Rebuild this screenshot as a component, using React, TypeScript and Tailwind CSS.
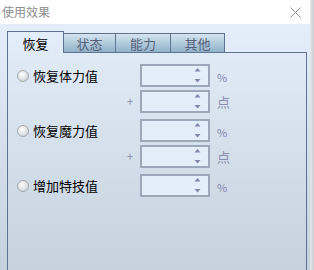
import React from "react";

const font = { fontFamily: '"Noto Sans CJK SC", "Noto Sans", sans-serif' };

function Radio() {
  return (
    <div className="w-[12px] h-[12px] rounded-full border border-[#a4a8ac] bg-[radial-gradient(circle_at_40%_35%,#ffffff_0%,#e4e6e8_45%,#c4c8cc_100%)] shrink-0" />
  );
}

function Spin() {
  return (
    <div className="w-[70px] h-[23px] border-2 border-[#9aa8ba] bg-[#e4eefa] flex items-center justify-end pr-[7px] shrink-0">
      <svg width="7" height="17" viewBox="0 0 7 17">
        <polygon points="0.5,4.5 6.5,4.5 3.5,1" fill="#8486ad" />
        <polygon points="0.5,12 6.5,12 3.5,15.5" fill="#8486ad" />
      </svg>
    </div>
  );
}

function Row({
  label,
  plus,
  unit,
  mt,
}: {
  label?: string;
  plus?: boolean;
  unit: "%" | "点";
  mt: string;
}) {
  return (
    <div className={`flex items-center h-[23px] ${mt}`}>
      <div className="w-[117px] flex items-center pl-[9px] gap-[4px]">
        {label && (
          <>
            <Radio />
            <span className="text-[13px] leading-none text-black whitespace-nowrap">{label}</span>
          </>
        )}
      </div>
      <div className="w-[10px] flex justify-center text-[11px] text-[#8a8aa8] leading-none">
        {plus ? "+" : ""}
      </div>
      <div className="w-[5px]" />
      <Spin />
      <div className="w-[7px]" />
      {unit === "%" ? (
        <span className="text-[11px] leading-none text-[#8486b0] mt-[3px]">%</span>
      ) : (
        <span className="text-[13px] leading-none text-[#8a8cac]">点</span>
      )}
    </div>
  );
}

export default function App() {
  return (
    <div className="w-[314px] h-[270px] flex overflow-hidden" style={font}>
      <div className="w-[310px] flex flex-col">
        <div className="h-[24px] bg-white flex items-center justify-between pl-[2px] pr-[9px]">
          <span className="text-[12px] text-[#8c8c8c] leading-none">使用效果</span>
          <svg width="11" height="11" viewBox="0 0 11 11">
            <line x1="0.5" y1="0.5" x2="10.5" y2="10.5" stroke="#8c8c8c" strokeWidth="1" />
            <line x1="10.5" y1="0.5" x2="0.5" y2="10.5" stroke="#8c8c8c" strokeWidth="1" />
          </svg>
        </div>
        <div className="flex-1 bg-[linear-gradient(to_bottom,#e3eefa,#c5d1dd)] pl-[7px] pt-[7px] pr-[3px] flex flex-col">
          <div className="flex items-end h-[22px]">
            <div className="w-[57px] h-[22px] border-l border-t border-r border-[#5f7392] flex items-center justify-center text-[13px] text-black leading-none pt-[1px]">
              恢复
            </div>
            <div className="w-[52px] h-[20px] border-t border-r border-b border-[#5f7392] bg-[linear-gradient(to_bottom,#d4e4ee,#92b2c9)] flex items-center justify-center text-[13px] text-[#56627a] leading-none">
              状态
            </div>
            <div className="w-[55px] h-[20px] border-t border-r border-b border-[#5f7392] bg-[linear-gradient(to_bottom,#d4e4ee,#92b2c9)] flex items-center justify-center text-[13px] text-[#56627a] leading-none">
              能力
            </div>
            <div className="w-[54px] h-[20px] border-t border-r border-b border-[#5f7392] bg-[linear-gradient(to_bottom,#d4e4ee,#92b2c9)] flex items-center justify-center text-[13px] text-[#56627a] leading-none">
              其他
            </div>
            <div className="flex-1 h-[1px] border-b border-r border-[#5f7392]" />
          </div>
          <div className="flex-1 border-l border-r border-[#5f7392] flex flex-col">
            <Row label="恢复体力值" unit="%" mt="mt-[11px]" />
            <Row plus unit="点" mt="mt-[3px]" />
            <Row label="恢复魔力值" unit="%" mt="mt-[6px]" />
            <Row plus unit="点" mt="mt-[3px]" />
            <Row label="增加特技值" unit="%" mt="mt-[6px]" />
          </div>
        </div>
      </div>
      <div className="w-[4px] bg-[linear-gradient(to_right,#e6e8ea,#c8ccd0)]" />
    </div>
  );
}
